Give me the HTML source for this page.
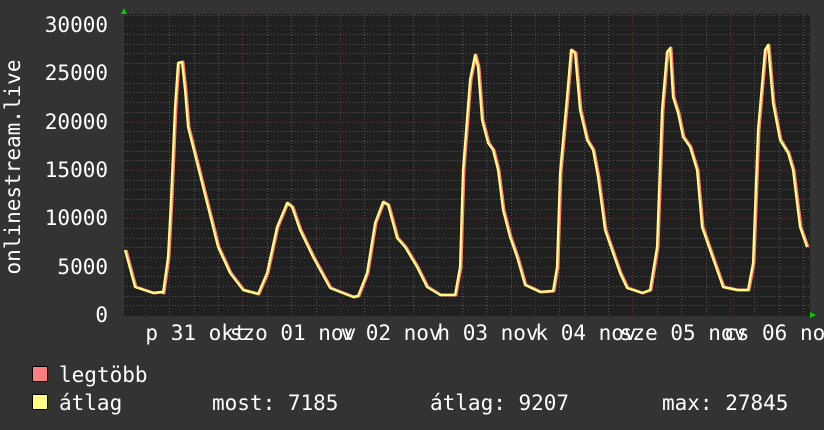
<!DOCTYPE html>
<html><head><meta charset="utf-8"><style>
body{margin:0;background:#333;}
svg{display:block}
text{font-family:"DejaVu Sans Mono","Liberation Mono",monospace;fill:#fff;font-size:21px}
</style></head><body>
<svg width="824" height="430" xmlns="http://www.w3.org/2000/svg">
<rect width="824" height="430" fill="#333"/>
<rect x="124" y="14" width="686" height="302" fill="#202020"/>
<g stroke="#555" stroke-width="1" stroke-dasharray="1,2">
<path d="M124 34.5H810M124 44.5H810M124 53.5H810M124 63.5H810M124 83.5H810M124 92.5H810M124 102.5H810M124 112.5H810M124 131.5H810M124 141.5H810M124 151.5H810M124 160.5H810M124 180.5H810M124 189.5H810M124 199.5H810M124 209.5H810M124 228.5H810M124 238.5H810M124 247.5H810M124 257.5H810M124 276.5H810M124 286.5H810M124 296.5H810M124 305.5H810M124 15.5H810"/>
<path d="M169.5 14V316M194.5 14V316M218.5 14V316M267.5 14V316M291.5 14V316M316.5 14V316M364.5 14V316M389.5 14V316M413.5 14V316M462.5 14V316M486.5 14V316M511.5 14V316M559.5 14V316M584.5 14V316M608.5 14V316M657.5 14V316M681.5 14V316M706.5 14V316M754.5 14V316M779.5 14V316M803.5 14V316"/>
</g>
<g stroke="#6a3535" stroke-width="1" stroke-dasharray="1,2">
<path d="M124 25.5H810M124 73.5H810M124 122.5H810M124 170.5H810M124 218.5H810M124 267.5H810"/>
<path d="M145.5 14V316M242.5 14V316M340.5 14V316M437.5 14V316M535.5 14V316M632.5 14V316M730.5 14V316"/>
</g>
<polygon points="121,14 127,14 124,8" fill="#0c0"/>
<polygon points="810,312 810,318 816,315" fill="#0c0"/>
<g fill="none" stroke-linejoin="round">
<polyline stroke="#ff7f7f" stroke-width="3" transform="translate(1,0)" points="125,250 135,287 153,293 162,292 163,293 168,257 171,200 175,107 178,63 182,62 185,90 188,127 193,147 203,187 212,223 218,247 230,273 243,290 258,294 267,273 277,227 287,203 292,207 300,230 313,257 330,288 353,297 358,296 367,273 375,223 383,202 388,205 397,238 405,247 417,267 427,287 440,295 455,295 460,267 463,170 470,80 475,55 478,67 482,120 488,143 493,150 498,170 503,210 510,237 517,257 525,285 540,292 553,291 557,267 560,173 567,97 571,50 575,53 580,110 587,140 593,150 598,177 605,230 613,253 620,273 627,288 642,293 650,290 657,247 662,110 667,52 670,48 673,97 678,113 683,137 690,147 697,170 702,227 710,250 723,287 737,290 748,290 753,263 758,130 765,50 768,45 773,103 780,140 788,153 793,170 797,203 800,227 807,247"/>
<polyline stroke="#ffff80" stroke-width="2.2" points="125,250 135,287 153,293 162,292 163,293 168,257 171,200 175,107 178,63 182,62 185,90 188,127 193,147 203,187 212,223 218,247 230,273 243,290 258,294 267,273 277,227 287,203 292,207 300,230 313,257 330,288 353,297 358,296 367,273 375,223 383,202 388,205 397,238 405,247 417,267 427,287 440,295 455,295 460,267 463,170 470,80 475,55 478,67 482,120 488,143 493,150 498,170 503,210 510,237 517,257 525,285 540,292 553,291 557,267 560,173 567,97 571,50 575,53 580,110 587,140 593,150 598,177 605,230 613,253 620,273 627,288 642,293 650,290 657,247 662,110 667,52 670,48 673,97 678,113 683,137 690,147 697,170 702,227 710,250 723,287 737,290 748,290 753,263 758,130 765,50 768,45 773,103 780,140 788,153 793,170 797,203 800,227 807,247"/>
</g>
<g text-anchor="end">
<text x="108" y="32">30000</text>
<text x="108" y="80">25000</text>
<text x="108" y="129">20000</text>
<text x="108" y="177">15000</text>
<text x="108" y="225">10000</text>
<text x="108" y="274">5000</text>
<text x="108" y="322">0</text>
</g>
<text transform="translate(20,167) rotate(-90)" text-anchor="middle">onlinestream.live</text>
<g text-anchor="middle">
<text x="196" y="340">p 31 okt</text>
<text x="293" y="340">szo 01 nov</text>
<text x="391" y="340">v 02 nov</text>
<text x="488" y="340">h 03 nov</text>
<text x="586" y="340">k 04 nov</text>
<text x="683" y="340">sze 05 nov</text>
<text x="781" y="340">cs 06 nov</text>
</g>
<rect x="32.5" y="366.5" width="15" height="15" fill="#ff7f7f" stroke="#000"/>
<rect x="32.5" y="394.5" width="15" height="15" fill="#ffff80" stroke="#000"/>
<text x="59" y="382">legtöbb</text>
<text x="59" y="410">átlag</text>
<text x="212" y="410">most: 7185</text>
<text x="430" y="410">átlag: 9207</text>
<text x="662" y="410">max: 27845</text>
</svg>
</body></html>
